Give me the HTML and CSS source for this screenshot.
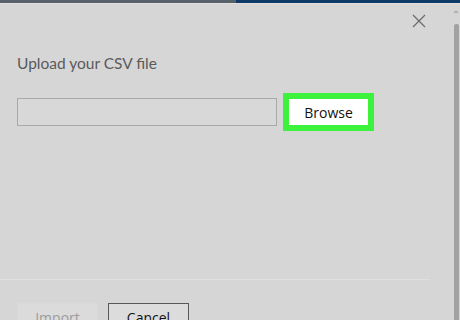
FILE: index.html
```html
<!DOCTYPE html>
<html lang="en">
<head>
  <meta charset="UTF-8" />
  <title>Import CSV</title>
  <link rel="stylesheet" href="styles.css">
</head>
<body>
  <div class="topbar">
    <div class="seg-left"></div>
    <div class="seg-right"></div>
  </div>
  <div class="window">
    <div class="dialog">
      <div class="dialog-head">
        <button class="close" aria-label="Close">
          <svg width="14" height="14" viewBox="0 0 14 14">
            <path d="M1 1 L13 13 M13 1 L1 13" stroke="#6a6a6a" stroke-width="1.2" fill="none" />
          </svg>
        </button>
      </div>
      <h2 class="title">Upload your CSV file</h2>
      <div class="file-row">
        <div class="file-input"></div>
        <div class="highlight">
          <button class="browse">Browse</button>
        </div>
      </div>
      <div class="spacer"></div>
      <div class="footer">
        <button class="btn btn-disabled">Import</button>
        <button class="btn btn-cancel">Cancel</button>
      </div>
    </div>
    <div class="scrollbar">
      <div class="arrow"></div>
      <div class="thumb"></div>
    </div>
  </div>
</body>
</html>
```

FILE: styles.css
```css
* {
  margin: 0;
  padding: 0;
  box-sizing: border-box;
}

body {
  width: 460px;
  height: 320px;
  overflow: hidden;
  background: #d6d6d6;
  font-family: 'Open Sans', 'Noto Sans', sans-serif;
  color: #555;
}

.topbar {
  display: flex;
  height: 4px;
  border-bottom: 1px solid #e4dedb;
}

.seg-left {
  width: 236px;
  background: #56616c;
}

.seg-right {
  flex: 1;
  background: #0d3a68;
}

.window {
  display: flex;
  height: 316px;
}

.dialog {
  flex: 1;
  display: flex;
  flex-direction: column;
}

.dialog-head {
  display: flex;
  justify-content: flex-end;
  padding: 10px 26px 0 0;
  height: 30px;
}

.close {
  background: none;
  border: none;
  width: 14px;
  height: 14px;
  display: flex;
}

.title {
  font-family: Lato, 'Open Sans', sans-serif;
  font-weight: 400;
  font-size: 15.5px;
  color: #5a5a5a;
  margin: 19px 0 0 17px;
  line-height: 20px;
}

.file-row {
  display: flex;
  align-items: center;
  margin: 20px 0 0 17px;
  gap: 6px;
}

.file-input {
  width: 260px;
  height: 28px;
  border: 1px solid #a9a9a9;
  background: #d8d8d8;
}

.highlight {
  background: #3cf23c;
  padding: 6px;
}

.browse {
  display: block;
  width: 79px;
  height: 26px;
  background: #fff;
  border: none;
  font-family: 'Open Sans', 'Noto Sans', sans-serif;
  font-size: 14px;
  color: #111;
}

.spacer {
  flex: 1;
  border-bottom: 1px solid #dfdfdf;
  margin-right: 22px;
}

.footer {
  display: flex;
  gap: 10px;
  padding: 23px 0 0 17px;
  height: 40px;
}

.btn {
  width: 81px;
  height: 30px;
  font-family: 'Open Sans', 'Noto Sans', sans-serif;
  font-size: 14px;
  padding-bottom: 2px;
}

.btn-disabled {
  background: #dbdbdb;
  border: 1px solid #d9d9d9;
  color: #9c9c9c;
}

.btn-cancel {
  background: #dcdcdc;
  border: 1px solid #585858;
  color: #111;
}

.scrollbar {
  width: 8px;
  display: flex;
  flex-direction: column;
  align-items: center;
  padding-top: 6px;
}

.arrow {
  width: 0;
  height: 0;
  border-left: 3px solid transparent;
  border-right: 3px solid transparent;
  border-bottom: 3px solid #b0b0b0;
}

.thumb {
  margin-top: 11px;
  width: 5px;
  flex: 1;
  background: #a2a2a2;
  border-radius: 2px 2px 0 0;
}
```
